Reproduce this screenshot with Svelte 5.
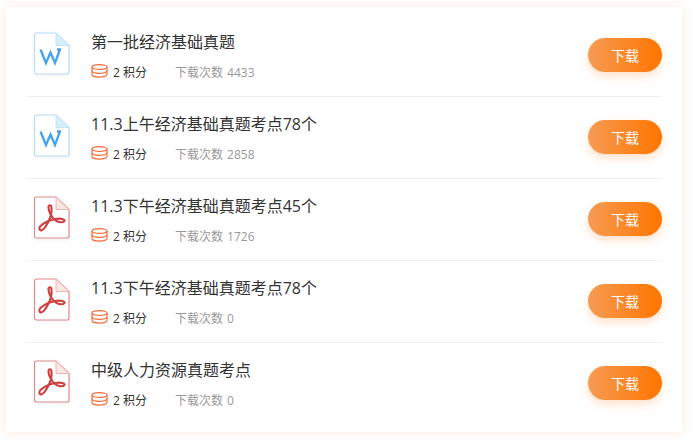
<script>
  const files = [
    { type: 'word', title: '第一批经济基础真题', count: 4433 },
    { type: 'word', title: '11.3上午经济基础真题考点78个', count: 2858 },
    { type: 'pdf', title: '11.3下午经济基础真题考点45个', count: 1726 },
    { type: 'pdf', title: '11.3下午经济基础真题考点78个', count: 0 },
    { type: 'pdf', title: '中级人力资源真题考点', count: 0 }
  ];
</script>

<div class="page">
  <div class="card">
    {#each files as file}
      <div class="row">
        {#if file.type === 'word'}
          <svg class="file-icon" width="36" height="44" viewBox="0 0 36 44">
            <path d="M2.500 1h19.500L35 13.500V40a2 2 0 0 1-2 2H2.500a2 2 0 0 1-2-2V3a2 2 0 0 1 2-2z" fill="#fff" stroke="#b5dcf8" stroke-width="1.200" />
            <path d="M22 1v12.500h13z" fill="#d9eefb" stroke="#c4e3f9" stroke-width="1" />
            <path d="M6.500 17.500l5.500 13.500 4.500-10.500L21 31l5-13.500M23 17.500h4" fill="none" stroke="#45a3ec" stroke-width="2.300" />
          </svg>
        {:else}
          <svg class="file-icon" width="36" height="44" viewBox="0 0 36 44">
            <path d="M2.500 1h19.500L35 13.500V40a2 2 0 0 1-2 2H2.500a2 2 0 0 1-2-2V3a2 2 0 0 1 2-2z" fill="#fff" stroke="#e08a8a" stroke-width="1.200" />
            <path d="M22 1v12.500h13z" fill="#fae6e4" stroke="#eeb5b2" stroke-width="1" />
            <path d="M6 34c2.500 1.500 5-2 8-7.500 2.500-4.500 4-10.500 3.500-15-.3-3-3-3-3 0 0 4.500 3.500 10 6.500 12.500 3 2.500 8.500 3 9.500 1 .7-1.700-4-3-9-2-5 1-11 3.500-14.500 6.500-2 1.800-2 3.500-1 4.500z" fill="none" stroke="#cf3f3f" stroke-width="2.100" />
          </svg>
        {/if}
        <div class="info">
          <div class="title">{file.title}</div>
          <div class="meta">
            <svg class="coins" width="17" height="14" viewBox="0 0 17 14">
              <g fill="none" stroke="#f96b38" stroke-width="1.200">
                <ellipse cx="8.500" cy="3" rx="7.500" ry="2.400" />
                <path d="M1 3v7.500c0 1.400 3.400 2.600 7.500 2.600s7.500-1.200 7.500-2.600V3" />
                <path d="M1 6.800c0 1.400 3.400 2.500 7.500 2.500s7.500-1.100 7.500-2.500" />
              </g>
            </svg>
            <span class="points">2 积分</span>
            <span class="count">下载次数 {file.count}</span>
          </div>
        </div>
        <button class="download" type="button">下载</button>
      </div>
    {/each}
  </div>
</div>

<style>
  :global(body) {
    margin: 0;
    background: #fff;
  }
  .page {
    width: 693px;
    height: 443px;
    box-sizing: border-box;
    padding: 7px 11px 11px 6px;
    font-family: "Open Sans", "Noto Sans CJK SC", sans-serif;
    overflow: hidden;
  }
  .card {
    height: 425px;
    box-sizing: border-box;
    padding: 8px 20px 0;
    background: #fff;
    box-shadow: 0 0 10px rgba(255, 100, 50, 0.16);
  }
  .row {
    height: 82px;
    box-sizing: border-box;
    display: flex;
    align-items: center;
    border-bottom: 1px solid #efefef;
    padding-bottom: 1px;
  }
  .row:last-child {
    border-bottom-color: transparent;
  }
  .file-icon {
    margin: -2px 0 0 8px;
    flex: none;
    filter: drop-shadow(0 1px 2px rgba(0, 0, 0, 0.06));
  }
  .info {
    flex: 1;
    margin: 2px 0 0 21px;
  }
  .title {
    font-size: 16px;
    line-height: 22px;
    color: #333;
  }
  .meta {
    display: flex;
    align-items: center;
    margin-top: 12px;
    font-size: 12px;
    line-height: 16px;
  }
  .coins {
    margin-top: -4px;
  }
  .points {
    margin-left: 5px;
    color: #333;
  }
  .count {
    margin-left: 28px;
    color: #999;
    word-spacing: 1px;
  }
  .download {
    width: 74px;
    height: 34px;
    border: none;
    border-radius: 17px;
    padding: 0;
    color: #fff;
    font-family: inherit;
    font-size: 14px;
    background: linear-gradient(90deg, #f69b52, #ff7500);
    box-shadow: 0 4px 8px rgba(255, 130, 40, 0.25);
  }
</style>
